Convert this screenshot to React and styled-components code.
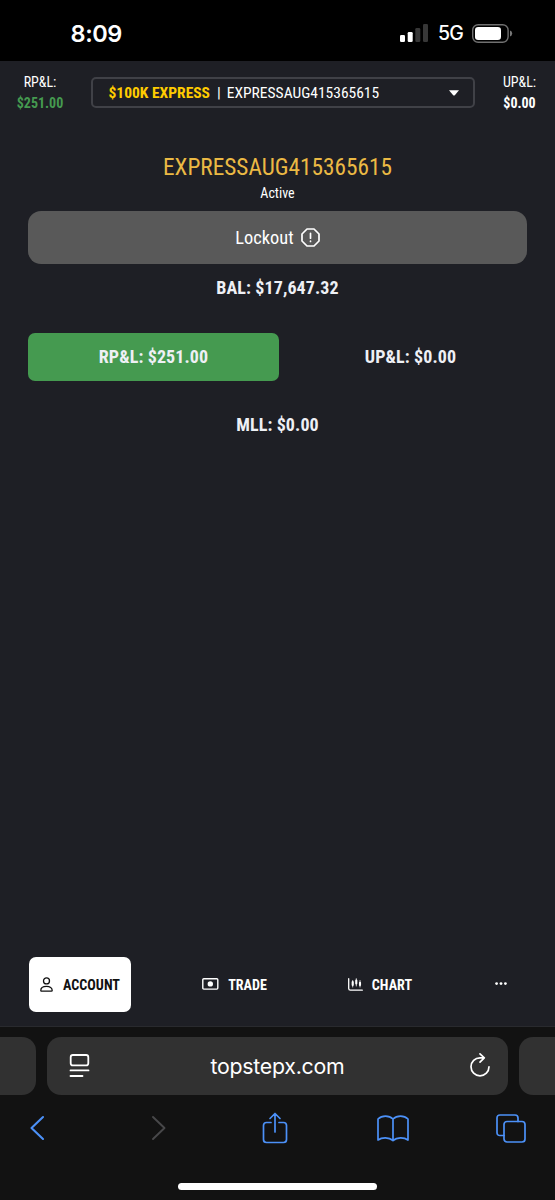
import React from "react"
import styled, { createGlobalStyle } from "styled-components"

const GlobalStyle = createGlobalStyle`
  body {
    margin: 0;
    background-color: #1e1f25;
  }
`

const Screen = styled.div`
  display: flex;
  flex-direction: column;
  width: 555px;
  height: 1200px;
  overflow: hidden;
  color: #fff;
  background-color: #1e1f25;
  font-family: "Roboto Condensed", Roboto, sans-serif;
  font-stretch: condensed;
  white-space: nowrap;
`

const StatusBar = styled.header`
  display: flex;
  justify-content: space-between;
  align-items: center;
  box-sizing: border-box;
  height: 61px;
  padding: 5px 42px 0 70.5px;
  background-color: #000;
  font-family: Inter, "Liberation Sans", sans-serif;
  font-stretch: normal;
`

const Clock = styled.span`
  font-size: 23.5px;
  font-weight: 600;
  letter-spacing: -0.4px;
`

const Signals = styled.div`
  display: flex;
  align-items: center;
`

const Network = styled.span`
  width: 25px;
  margin: 0 9px 0 10px;
  font-size: 19.5px;
  font-weight: 500;
  letter-spacing: -0.7px;
`

const AccountBar = styled.div`
  display: flex;
  align-items: flex-start;
  height: 64px;
  padding-top: 11px;
  box-sizing: border-box;
`

const Pnl = styled.div`
  width: ${props => props.$width}px;
  font-size: 14px;
  line-height: 20.5px;
  text-align: center;
`

const PnlValue = styled.div`
  color: ${props => props.$color || "#fff"};
  font-weight: 700;
`

const AccountSelect = styled.button`
  display: flex;
  align-items: center;
  box-sizing: border-box;
  width: 384px;
  height: 31px;
  margin: 5px 11px 0 10.5px;
  padding: 0 14px 0 16px;
  border: 2px solid #404147;
  border-radius: 5px;
  color: #fff;
  background-color: transparent;
  font: inherit;
  font-size: 15.5px;
`

const Plan = styled.span`
  color: #fc0;
  font-weight: 700;
`

const Divider = styled.span`
  margin: 0 6px 0 7px;
`

const Caret = styled.svg`
  margin-left: auto;
`

const Main = styled.main`
  display: flex;
  flex: 1;
  flex-direction: column;
  align-items: center;
  padding: 0 28px;
`

const AccountName = styled.h1`
  margin: 27px 0 0;
  color: #ebb944;
  font-size: 23.3px;
  font-weight: 400;
  line-height: 30px;
`

const Status = styled.div`
  margin-top: 1px;
  font-size: 14px;
  line-height: 20px;
`

const LockoutButton = styled.button`
  display: flex;
  align-items: center;
  justify-content: center;
  gap: 7px;
  width: 100%;
  height: 53px;
  margin-top: 8px;
  padding: 0;
  border: 0;
  border-radius: 13px;
  color: #fff;
  background-color: #595959;
  font: inherit;
  font-size: 18.4px;
`

const Stat = styled.div`
  width: ${props => props.$width || "auto"};
  border-radius: 7px;
  color: #eef0f5;
  background-color: ${props => props.$fill || "transparent"};
  font-size: 18px;
  font-weight: 700;
  line-height: 48px;
  letter-spacing: 0.1px;
  text-align: center;
`

const StatRow = styled.div`
  display: flex;
  gap: 15px;
  width: 100%;
  margin: 21px 0 20px;
`

const TabBar = styled.nav`
  display: flex;
  align-items: center;
  height: 56px;
  padding: 0 29px 14px;
  border-bottom: 1px solid #292a2e;
`

const Tab = styled.a`
  display: flex;
  align-items: center;
  justify-content: center;
  gap: ${props => (props.$active ? 10 : 9)}px;
  width: ${props => props.$width}px;
  height: 55px;
  margin-right: ${props => props.$after || 0}px;
  border-radius: 7px;
  color: ${props => (props.$active ? "#111" : "#fff")};
  background-color: ${props => (props.$active ? "#fff" : "transparent")};
  font-size: 14.1px;
  font-weight: 700;
`

const TabLabel = styled.span`
  padding-top: 2px;
`

const Browser = styled.footer`
  height: 173px;
  background-color: #121212;
`

const AddressRow = styled.div`
  display: flex;
  gap: 11px;
  padding-top: 10px;
`

const SideTab = styled.div`
  width: 36px;
  height: 58px;
  border-radius: ${props => (props.$right ? "14px 0 0 14px" : "0 14px 14px 0")};
  background-color: #313131;
`

const Address = styled.div`
  display: flex;
  align-items: center;
  justify-content: space-between;
  box-sizing: border-box;
  width: 461px;
  height: 58px;
  padding: 0 17px 0 20px;
  border-radius: 14px;
  background-color: #313131;
  font-family: Inter, "Liberation Sans", sans-serif;
  font-size: 21.3px;
  font-stretch: normal;
  letter-spacing: -0.25px;
`

const Domain = styled.span`
  padding-right: 5px;
`

const Toolbar = styled.div`
  display: flex;
  align-items: center;
  justify-content: space-between;
  height: 36px;
  padding: 15px 27px 0 20px;
`

const ToolButton = styled.a`
  display: flex;
  justify-content: center;
  box-sizing: border-box;
  width: 34px;
  padding-left: ${props => props.$shift || 0}px;
`

const HomeIndicator = styled.div`
  width: 199px;
  height: 7px;
  margin: 37px auto 0;
  border-radius: 4px;
  background-color: #fff;
`

const Line = styled.svg`
  flex: none;
  fill: none;
  stroke: ${props => props.$color || "currentColor"};
  stroke-width: ${props => props.$weight || 1.7};
  stroke-linecap: round;
  stroke-linejoin: round;
`

const BLUE = "#4c91f8"

const SignalIcon = () => (
  <svg width="28" height="18" fill="#fff">
    <rect x="0" y="11" width="5" height="7" rx="1.3" />
    <rect x="7.7" y="8" width="5" height="10" rx="1.3" />
    <rect x="15.3" y="4" width="5" height="14" rx="1.3" fill="#373737" />
    <rect x="23" y="0" width="5" height="18" rx="1.3" fill="#373737" />
  </svg>
)

const BatteryIcon = () => (
  <svg width="41" height="19">
    <rect x=".7" y=".7" width="35.4" height="17.6" rx="5.5" fill="none" stroke="#707070" strokeWidth="1.4" />
    <rect x="3" y="3" width="26" height="13" rx="3.2" fill="#fff" />
    <path d="M38 6.5Q40.2 7.2 40.2 9.5T38 12.5Z" fill="#777" />
  </svg>
)

const App = () => (
  <>
    <GlobalStyle />
    <Screen>
      <StatusBar>
        <Clock>8:09</Clock>
        <Signals>
          <SignalIcon />
          <Network>5G</Network>
          <BatteryIcon />
        </Signals>
      </StatusBar>
      <AccountBar>
        <Pnl $width={80}>
          RP&amp;L:
          <PnlValue $color="#459a50">$251.00</PnlValue>
        </Pnl>
        <AccountSelect>
          <Plan>$100K EXPRESS</Plan>
          <Divider>|</Divider>
          EXPRESSAUG415365615
          <Caret width="10" height="6">
            <path d="M0 .3H10L5.8 5.2Q5 6 4.2 5.2Z" fill="#fff" />
          </Caret>
        </AccountSelect>
        <Pnl $width={68}>
          UP&amp;L:
          <PnlValue>$0.00</PnlValue>
        </Pnl>
      </AccountBar>
      <Main>
        <AccountName>EXPRESSAUG415365615</AccountName>
        <Status>Active</Status>
        <LockoutButton>
          Lockout
          <Line width="19" height="19" viewBox="0 0 19 19">
            <path d="M6 1H13L18 6V13L13 18H6L1 13V6ZM9.5 5.3V10.2M9.5 13.2V13.5" />
          </Line>
        </LockoutButton>
        <Stat>BAL: $17,647.32</Stat>
        <StatRow>
          <Stat $width="251px" $fill="#459a50">RP&amp;L: $251.00</Stat>
          <Stat $width="233px">UP&amp;L: $0.00</Stat>
        </StatRow>
        <Stat>MLL: $0.00</Stat>
      </Main>
      <TabBar>
        <Tab $width={102} $after={40} $active>
          <Line width="13" height="15" viewBox="0 0 13 15" $weight={1.3}>
            <circle cx="6.5" cy="3.9" r="3" />
            <path d="M.8 13.4C.8 10.8 3 9.4 6.5 9.4S12.2 10.8 12.2 13.4Q12.2 14.2 11.4 14.2H1.6Q.8 14.2.8 13.4Z" />
          </Line>
          <TabLabel>ACCOUNT</TabLabel>
        </Tab>
        <Tab $width={127} $after={23}>
          <Line width="17" height="12" viewBox="0 0 17 12" $weight={1.4}>
            <rect x=".8" y=".7" width="15" height="10.4" rx="1" />
            <circle cx="8.3" cy="5.9" r="2.7" fill="#fff" stroke="none" />
          </Line>
          <TabLabel>TRADE</TabLabel>
        </Tab>
        <Tab $width={118} $after={51}>
          <Line width="15" height="13" viewBox="0 0 15 13" $weight={1.3}>
            <path d="M.7.7V10.5Q.7 12.2 2.4 12.2H14.3" />
            <path d="M4.7 2.5V9M8.3.7V8M12 2.5V9" strokeWidth=".8" />
            <path d="M4.7 4V7M8.3 2.5V5.5M12 4.8V7" strokeWidth="2.1" />
          </Line>
          <TabLabel>CHART</TabLabel>
        </Tab>
        <Tab $width={22}>
          <svg width="12" height="4" fill="#fff">
            <circle cx="1.6" cy="1.6" r="1.4" />
            <circle cx="6" cy="1.6" r="1.4" />
            <circle cx="10.4" cy="1.6" r="1.4" />
          </svg>
        </Tab>
      </TabBar>
      <Browser>
        <AddressRow>
          <SideTab />
          <Address>
            <Line width="24" height="26" viewBox="0 0 24 26" $weight={1.8}>
              <rect x="3.7" y="2" width="17.6" height="10.4" rx="2.2" />
              <path d="M3.5 17.4H21.5M3.5 23H15.5" />
            </Line>
            <Domain>topstepx.com</Domain>
            <Line width="22" height="26" viewBox="0 0 22 26" $weight={1.7}>
              <path d="M20 13.8A9 9 0 1 1 11 4.8H15M11 .9L15.3 4.8L11 9.1" />
            </Line>
          </Address>
          <SideTab $right />
        </AddressRow>
        <Toolbar>
          <ToolButton>
            <Line width="16" height="26" viewBox="0 0 16 26" $color={BLUE} $weight={2.1}>
              <path d="M14 2L2.5 13L14 24" />
            </Line>
          </ToolButton>
          <ToolButton $shift={6}>
            <Line width="16" height="26" viewBox="0 0 16 26" $color="#48484a" $weight={1.9}>
              <path d="M2 2L13.5 13L2 24" />
            </Line>
          </ToolButton>
          <ToolButton $shift={2}>
            <Line width="26" height="32" viewBox="0 0 26 32" $color={BLUE}>
              <path d="M9 10.5H4.5Q1.5 10.5 1.5 13.5V27.5Q1.5 30.5 4.5 30.5H21.5Q24.5 30.5 24.5 27.5V13.5Q24.5 10.5 21.5 10.5H17M13 20V1.5M8 6.5L13 1.5L18 6.5" />
            </Line>
          </ToolButton>
          <ToolButton $shift={1}>
            <Line width="32" height="27" viewBox="0 0 32 27" $color={BLUE}>
              <path d="M16 4C12 .2 5 .2 1 4V25C5 22 12 22 16 25.5C20 22 27 22 31 25V4C27 .2 20 .2 16 4ZM16 4V25.5" />
            </Line>
          </ToolButton>
          <ToolButton>
            <Line width="30" height="29" viewBox="0 0 30 29" $color={BLUE}>
              <rect x="8" y="7.5" width="21" height="20.5" rx="3" />
              <path d="M8 21.5H4Q1 21.5 1 18.5V4Q1 1 4 1H19Q22 1 22 4V7.5" />
            </Line>
          </ToolButton>
        </Toolbar>
        <HomeIndicator />
      </Browser>
    </Screen>
  </>
)

export default App
